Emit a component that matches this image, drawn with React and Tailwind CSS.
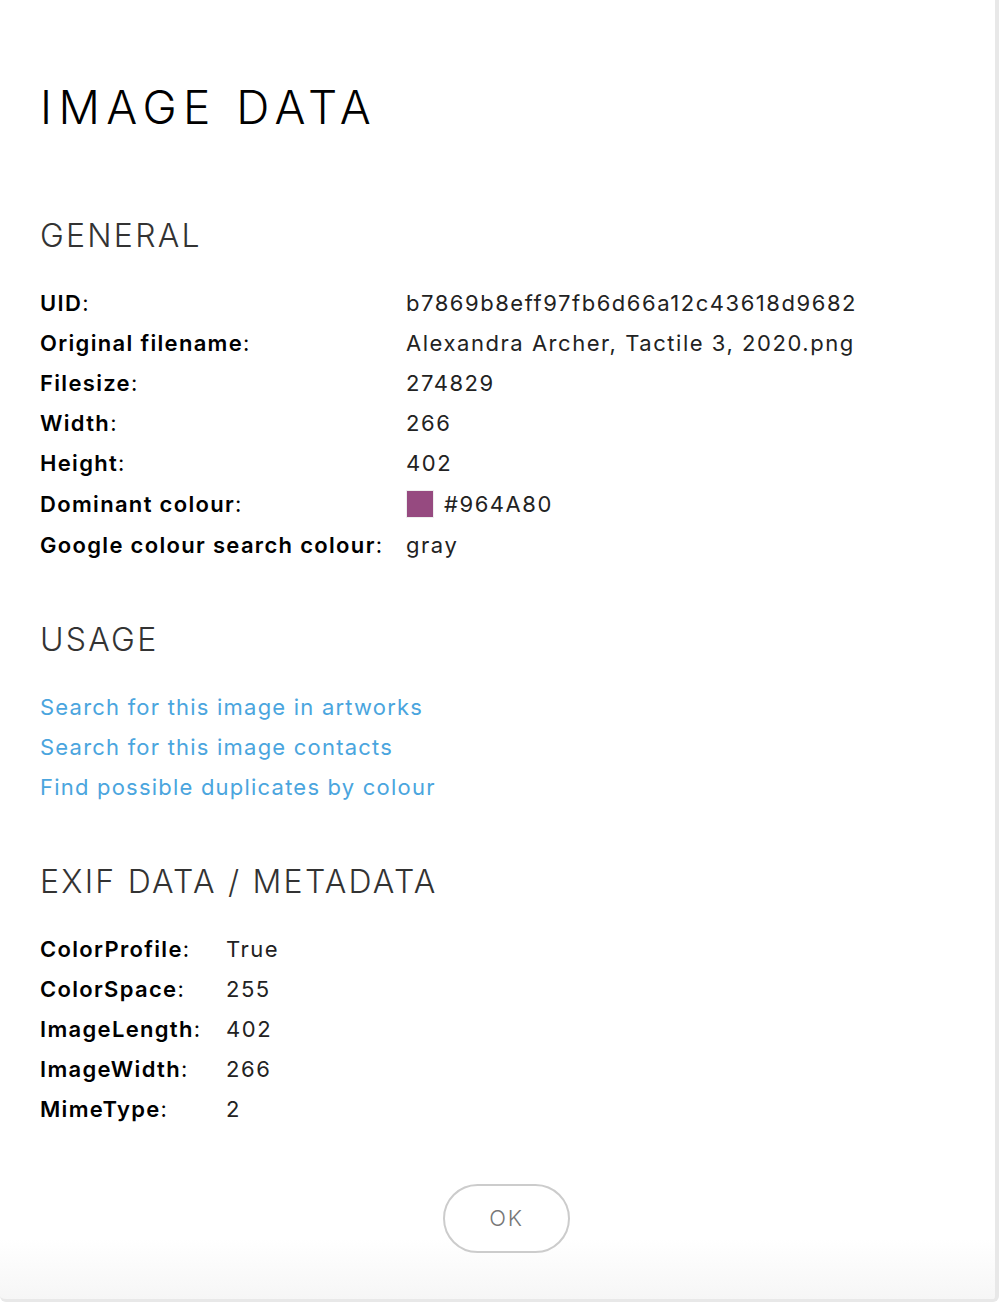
import React from 'react';

const general = [
  { label: 'UID', value: 'b7869b8eff97fb6d66a12c43618d9682' },
  { label: 'Original filename', value: 'Alexandra Archer, Tactile 3, 2020.png' },
  { label: 'Filesize', value: '274829' },
  { label: 'Width', value: '266' },
  { label: 'Height', value: '402' },
  { label: 'Dominant colour', value: '#964A80', swatch: '#964A80' },
  { label: 'Google colour search colour', value: 'gray' },
];

const exif = [
  { label: 'ColorProfile', value: 'True' },
  { label: 'ColorSpace', value: '255' },
  { label: 'ImageLength', value: '402' },
  { label: 'ImageWidth', value: '266' },
  { label: 'MimeType', value: '2' },
];

const links = [
  'Search for this image in artworks',
  'Search for this image contacts',
  'Find possible duplicates by colour',
];

const font = { fontFamily: 'Inter, Lato, sans-serif' };

const DataRow = ({ row, labelWidth }) => (
  <div className="flex items-center" style={{ minHeight: row.swatch ? 42 : 40 }}>
    <div className={`${labelWidth} shrink-0 text-[22px] tracking-[0.06em] text-black`}>
      <span className="font-semibold">{row.label}</span>:
    </div>
    <div className="flex items-center gap-[10px] text-[22px] tracking-[0.07em] text-[#222]">
      {row.swatch && (
        <span
          className="inline-block w-[28px] h-[28px] border border-[#eee]"
          style={{ backgroundColor: row.swatch }}
        />
      )}
      <span>{row.value}</span>
    </div>
  </div>
);

const SectionTitle = ({ children }) => (
  <h2 className="text-[32px] font-light tracking-[0.07em] text-[#333] leading-[40px]">
    {children}
  </h2>
);

export default function App() {
  return (
    <div className="bg-white" style={font}>
      <div className="w-[999px] h-[1302px] flex flex-col rounded-b-[6px] border-r-[4px] border-b-[3px] border-[#e8e8e8] bg-[linear-gradient(to_bottom,#ffffff_calc(100%-60px),#f6f6f6)] pl-[40px]">
        {/* header */}
        <h1 className="mt-[79px] text-[46px] font-light tracking-[0.14em] text-black leading-[56px]">
          IMAGE DATA
        </h1>

        {/* general */}
        <div className="mt-[81px]">
          <SectionTitle>GENERAL</SectionTitle>
        </div>
        <div className="mt-[27px] flex flex-col">
          {general.map((row) => (
            <DataRow key={row.label} row={row} labelWidth="w-[366px]" />
          ))}
        </div>

        {/* usage */}
        <div className="mt-[55px]">
          <SectionTitle>USAGE</SectionTitle>
        </div>
        <div className="mt-[27px] flex flex-col">
          {links.map((l) => (
            <a
              key={l}
              href="#"
              className="h-[40px] flex items-center text-[22px] tracking-[0.055em] text-[#4aa5de]"
            >
              {l}
            </a>
          ))}
        </div>

        {/* exif */}
        <div className="mt-[55px]">
          <SectionTitle>EXIF DATA / METADATA</SectionTitle>
        </div>
        <div className="mt-[27px] flex flex-col">
          {exif.map((row) => (
            <DataRow key={row.label} row={row} labelWidth="w-[186px]" />
          ))}
        </div>

        {/* footer */}
        <div className="mt-[55px] flex justify-center pr-[22px]">
          <button className="w-[127px] h-[69px] rounded-full border-2 border-[#cccccc] bg-white text-[22px] font-light tracking-[0.08em] text-[#777]">
            OK
          </button>
        </div>
      </div>
    </div>
  );
}
